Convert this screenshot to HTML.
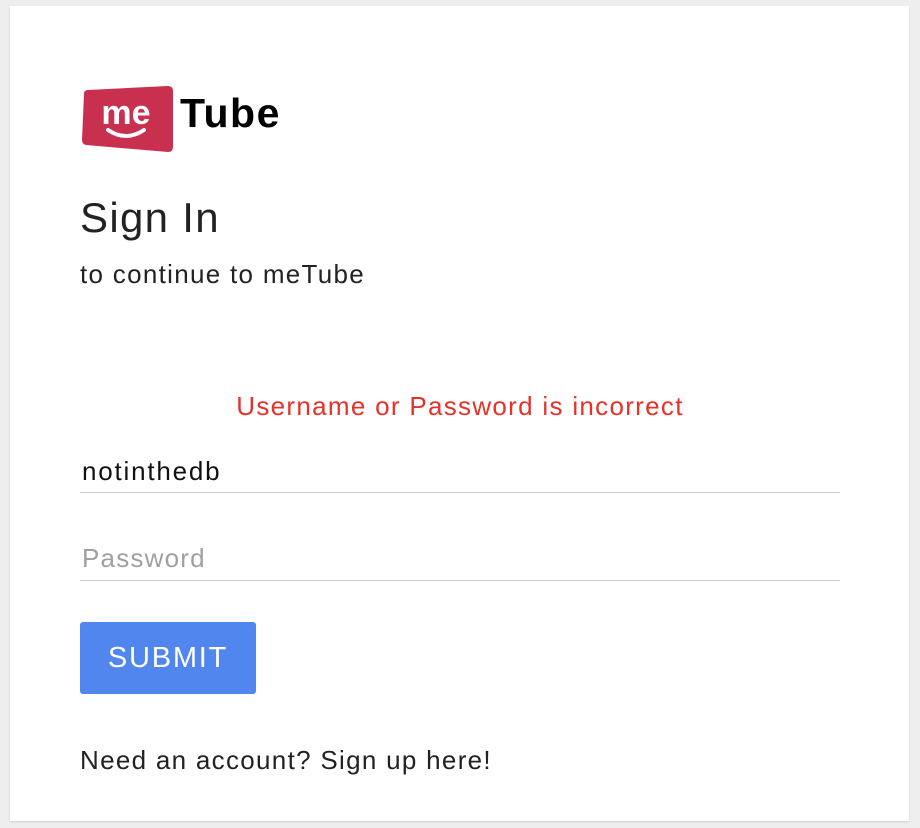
<!DOCTYPE html>
<html><head><style>
html,body{margin:0;padding:0;}
body{width:920px;height:828px;background:#eeeeee;font-family:"Liberation Sans",sans-serif;position:relative;overflow:hidden;color:#222;}
.card{position:absolute;left:10px;top:6px;width:899px;height:815px;background:#fff;box-shadow:0 1px 2px rgba(0,0,0,0.12);}
.abs{position:absolute;white-space:nowrap;}
.t{font-size:26px;letter-spacing:1.3px;}
.line{position:absolute;left:80px;width:760px;height:1px;background:#d0d0d0;}
.btn{position:absolute;left:80px;top:622px;width:176px;height:72px;background:#5186ee;border-radius:3px;color:#fff;font-size:29px;letter-spacing:1.8px;text-align:center;line-height:72px;}
</style></head><body>
<div class="card"></div>
<svg class="abs" style="left:80px;top:84px" width="96" height="70" viewBox="0 0 96 70">
  <path d="M4 10 Q4 6 8 6 L88 2 Q93 2 93 7 L93 63 Q93 68 88 68 L6 61 Q2 60 2 56 Z" fill="#c9304f"/>
  <text x="46" y="40" text-anchor="middle" font-family="Liberation Sans,sans-serif" font-weight="bold" font-size="34" fill="#fff">me</text>
  <path d="M28 46 Q46 58 64 46" stroke="#fff" stroke-width="4" fill="none" stroke-linecap="round"/>
</svg>
<div class="abs" style="left:180px;top:90px;font-size:41px;font-weight:bold;color:#000;letter-spacing:1.5px;">Tube</div>
<div class="abs" style="left:80px;top:194px;font-size:42px;letter-spacing:1.3px;">Sign In</div>
<div class="abs t" style="left:80px;top:259px;">to continue to meTube</div>
<div class="abs t" style="left:0;width:920px;text-align:center;top:391px;color:#e5332a;">Username or Password is incorrect</div>
<div class="abs t" style="left:82px;top:456px;color:#111;letter-spacing:1.8px;">notinthedb</div>
<div class="line" style="top:492px"></div>
<div class="abs t" style="left:82px;top:543px;color:#a0a0a0;letter-spacing:1.2px;">Password</div>
<div class="line" style="top:580px"></div>
<div class="btn">SUBMIT</div>
<div class="abs t" style="left:80px;top:745px;">Need an account? Sign up here!</div>
</body></html>
